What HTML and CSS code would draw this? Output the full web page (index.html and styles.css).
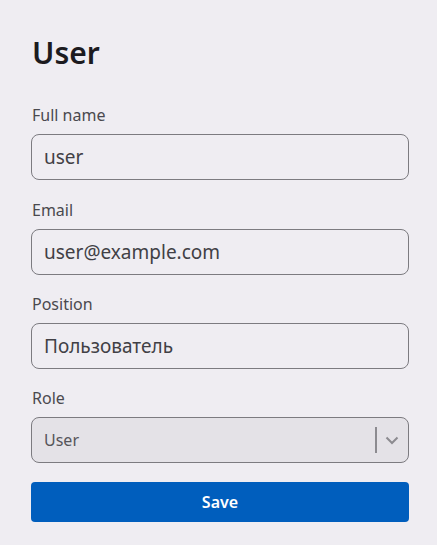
FILE: index.html
```html
<!DOCTYPE html>
<html lang="en">
<head>
    <meta charset="UTF-8">
    <meta name="viewport" content="width=device-width, initial-scale=1.0">
    <title>User</title>
    <link rel="stylesheet" href="styles.css">
</head>
<body>
    <main class="user-form">
        <h1>User</h1>

        <div class="field first">
            <label for="fullName">Full name</label>
            <input id="fullName" type="text" value="user">
        </div>

        <div class="field">
            <label for="email">Email</label>
            <input id="email" type="text" value="user@example.com">
        </div>

        <div class="field">
            <label for="position">Position</label>
            <input id="position" type="text" value="Пользователь">
        </div>

        <div class="field">
            <label>Role</label>
            <div class="select">
                <span class="select-value">User</span>
                <span class="select-sep"></span>
                <svg class="select-arrow" width="14" height="9" viewBox="0 0 14 9">
                    <path d="M1.5 1.5 L7 7 L12.5 1.5" fill="none" stroke="#8c8b90" stroke-width="2"/>
                </svg>
            </div>
        </div>

        <button class="save-btn">Save</button>
    </main>
</body>
</html>
```

FILE: styles.css
```css
* {
    margin: 0;
    padding: 0;
    box-sizing: border-box;
    font-family: "Noto Sans", "DejaVu Sans", sans-serif;
}

body {
    background-color: #efedf2;
    color: #1c1b1f;
}

.user-form {
    padding: 33px 28px 0 31px;
}

h1 {
    font-size: 30px;
    font-weight: 600;
    line-height: 40px;
    margin-left: 1px;
    margin-bottom: 32px;
}

.field {
    margin-bottom: 19px;
}

.field.first {
    margin-bottom: 20px;
}

.field label {
    display: block;
    font-size: 16px;
    line-height: 20px;
    color: #4a494e;
    margin-left: 1px;
    margin-bottom: 9px;
}

.field input {
    display: block;
    width: 100%;
    height: 46px;
    padding: 0 12px;
    border: 1px solid #7c7b80;
    border-radius: 8px;
    background: transparent;
    font-size: 19px;
    color: #414045;
    outline: none;
}

.select {
    display: flex;
    align-items: center;
    height: 46px;
    padding: 0 9px 0 12px;
    border: 1px solid #7c7b80;
    border-radius: 8px;
    background-color: #e4e2e7;
}

.select-value {
    flex: 1;
    font-size: 16px;
    color: #56555a;
}

.select-sep {
    width: 2px;
    height: 26px;
    background-color: #8c8b90;
    margin-right: 8px;
}

.select-arrow {
    display: block;
}

.save-btn {
    display: block;
    width: 100%;
    height: 40px;
    border: none;
    border-radius: 4px;
    background-color: #005ebd;
    color: white;
    font-size: 16px;
    font-weight: 600;
}
```
